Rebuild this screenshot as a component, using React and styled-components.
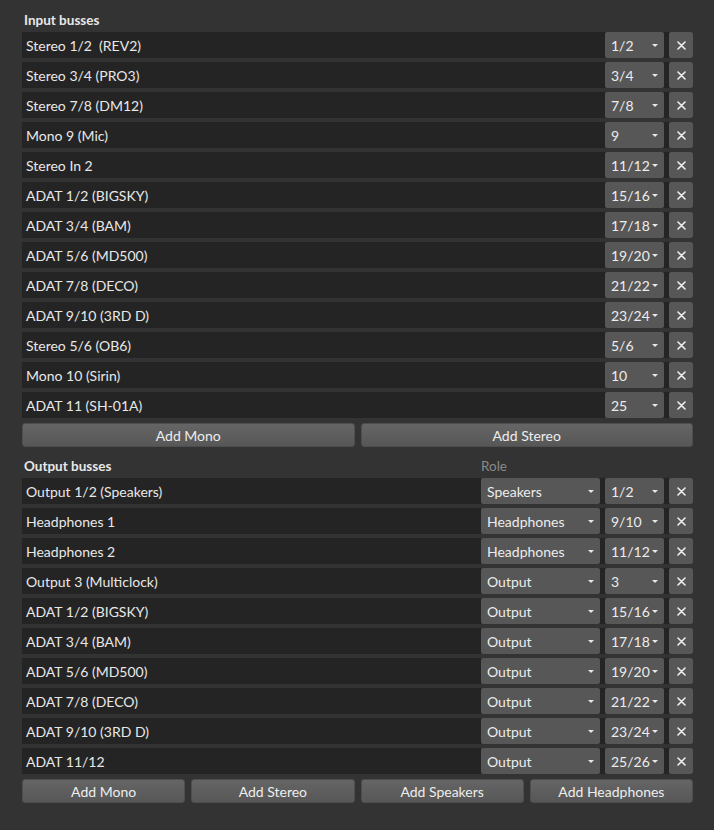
import React from "react";
import styled, { createGlobalStyle } from "styled-components";

const GlobalStyle = createGlobalStyle`
  html, body {
    margin: 0;
    padding: 0;
    background: #333333;
  }
  body {
    font-family: Lato, "Open Sans", sans-serif;
    color: #e8e8e8;
  }
`;

const Page = styled.div`
  width: 714px;
  min-height: 830px;
  box-sizing: border-box;
  padding: 10px 21px 0 22px;
  display: flex;
  flex-direction: column;
  gap: 9px;
`;

const Section = styled.section`
  display: flex;
  flex-direction: column;
`;

const HeadingRow = styled.div`
  display: flex;
  height: 20px;
  align-items: center;
  margin-bottom: 2px;
`;

const Heading = styled.div`
  flex: 1;
  font-size: 13.5px;
  font-weight: bold;
  padding-left: 2px;
`;

const ColumnLabel = styled.div`
  width: 212px;
  font-size: 13.5px;
  color: #8a8a8a;
`;

const Rows = styled.div`
  display: flex;
  flex-direction: column;
  gap: 4px;
`;

const Row = styled.div`
  display: flex;
  height: 26px;
  gap: 5px;
  background: #242424;
`;

const Name = styled.div`
  flex: 1;
  display: flex;
  align-items: center;
  padding-left: 4px;
  font-size: 14px;
  white-space: pre;
`;

const Select = styled.div`
  width: ${(p) => p.$width}px;
  box-sizing: border-box;
  display: flex;
  align-items: center;
  justify-content: space-between;
  padding: 0 6px 0 6px;
  background: #575757;
  border-radius: 2px;
  font-size: 14px;
  color: #ececec;
`;

const Caret = styled.span`
  width: 0;
  height: 0;
  border-left: 3px solid transparent;
  border-right: 3px solid transparent;
  border-top: 3px solid #e8e8e8;
`;

const Remove = styled.div`
  width: 24px;
  display: flex;
  align-items: center;
  justify-content: center;
  background: #575757;
  border-radius: 2px;
`;

const Buttons = styled.div`
  display: flex;
  gap: 6px;
  margin-top: 5px;
`;

const Button = styled.div`
  flex: 1;
  height: 24px;
  box-sizing: border-box;
  display: flex;
  align-items: center;
  justify-content: center;
  background: linear-gradient(#656565, #575757);
  border: 1px solid #4e4e4e;
  border-radius: 3px;
  font-size: 14px;
  color: #ededed;
`;

const inputs = [
  ["Stereo 1/2  (REV2)", "1/2"],
  ["Stereo 3/4 (PRO3)", "3/4"],
  ["Stereo 7/8 (DM12)", "7/8"],
  ["Mono 9 (Mic)", "9"],
  ["Stereo In 2", "11/12"],
  ["ADAT 1/2 (BIGSKY)", "15/16"],
  ["ADAT 3/4 (BAM)", "17/18"],
  ["ADAT 5/6 (MD500)", "19/20"],
  ["ADAT 7/8 (DECO)", "21/22"],
  ["ADAT 9/10 (3RD D)", "23/24"],
  ["Stereo 5/6 (OB6)", "5/6"],
  ["Mono 10 (Sirin)", "10"],
  ["ADAT 11 (SH-01A)", "25"],
];

const outputs = [
  ["Output 1/2 (Speakers)", "Speakers", "1/2"],
  ["Headphones 1", "Headphones", "9/10"],
  ["Headphones 2", "Headphones", "11/12"],
  ["Output 3 (Multiclock)", "Output", "3"],
  ["ADAT 1/2 (BIGSKY)", "Output", "15/16"],
  ["ADAT 3/4 (BAM)", "Output", "17/18"],
  ["ADAT 5/6 (MD500)", "Output", "19/20"],
  ["ADAT 7/8 (DECO)", "Output", "21/22"],
  ["ADAT 9/10 (3RD D)", "Output", "23/24"],
  ["ADAT 11/12", "Output", "25/26"],
];

const Cross = () => (
  <svg width="9" height="9" viewBox="0 0 9 9">
    <path d="M1 1L8 8M8 1L1 8" stroke="#eeeeee" strokeWidth="1.6" strokeLinecap="round" />
  </svg>
);

const Dropdown = ({ width, value }) => (
  <Select $width={width}>
    <span>{value}</span>
    <Caret />
  </Select>
);

export default function App() {
  return (
    <>
      <GlobalStyle />
      <Page>
        <Section>
          <HeadingRow>
            <Heading>Input busses</Heading>
          </HeadingRow>
          <Rows>
            {inputs.map(([name, ch], i) => (
              <Row key={i}>
                <Name>{name}</Name>
                <Dropdown width={59} value={ch} />
                <Remove><Cross /></Remove>
              </Row>
            ))}
          </Rows>
          <Buttons>
            <Button>Add Mono</Button>
            <Button>Add Stereo</Button>
          </Buttons>
        </Section>
        <Section>
          <HeadingRow>
            <Heading>Output busses</Heading>
            <ColumnLabel>Role</ColumnLabel>
          </HeadingRow>
          <Rows>
            {outputs.map(([name, role, ch], i) => (
              <Row key={i}>
                <Name>{name}</Name>
                <Dropdown width={119} value={role} />
                <Dropdown width={59} value={ch} />
                <Remove><Cross /></Remove>
              </Row>
            ))}
          </Rows>
          <Buttons>
            <Button>Add Mono</Button>
            <Button>Add Stereo</Button>
            <Button>Add Speakers</Button>
            <Button>Add Headphones</Button>
          </Buttons>
        </Section>
      </Page>
    </>
  );
}
